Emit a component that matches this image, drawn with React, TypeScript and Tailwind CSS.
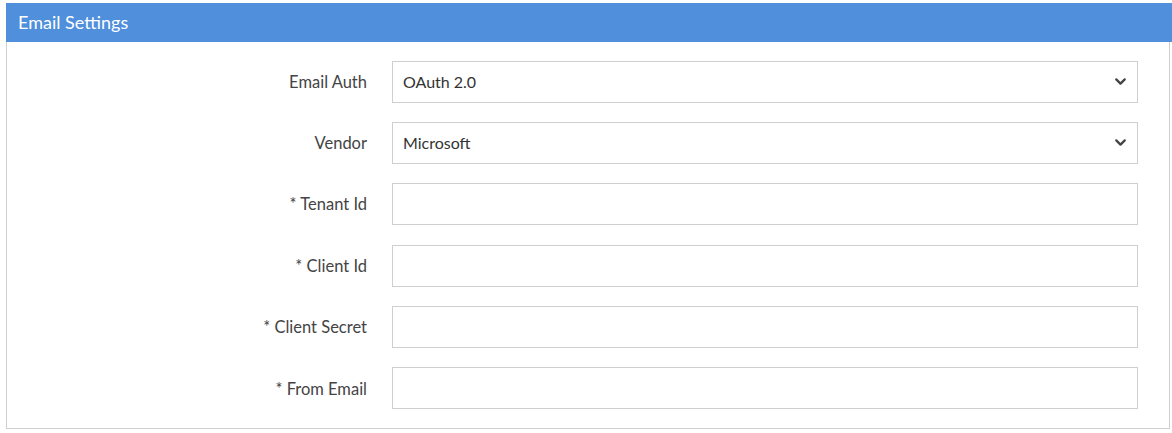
import { ChevronDown } from "lucide-react";

const fields = [
    { label: "Email Auth", type: "select", value: "OAuth 2.0" },
    { label: "Vendor", type: "select", value: "Microsoft" },
    { label: "* Tenant Id", type: "input", value: "" },
    { label: "* Client Id", type: "input", value: "" },
    { label: "* Client Secret", type: "input", value: "" },
    { label: "* From Email", type: "input", value: "" },
];

function App() {
    return (
        <div className="h-[433px] w-[1172px] bg-white pt-[3px] pl-[6px] font-['Lato','Open_Sans',sans-serif]">
            <div className="flex h-[39px] items-center bg-[#4f8fdc] pl-[12px] text-[18px] text-white">
                Email Settings
            </div>
            <div className="flex w-[1164px] flex-col gap-[19.4px] border-x border-b border-[#cfcfcf] pt-[18.5px] pb-[19px] pr-[31px]">
                {fields.map((f) => (
                    <div key={f.label} className="flex h-[42px] items-center">
                        <div className="w-[360px] pt-[1px] text-right text-[16.5px] text-[#444]">{f.label}</div>
                        <div className="ml-[25px] flex h-[42px] flex-1 items-center justify-between border border-[#cfcfcf] bg-white pl-[10px] pr-[8px] text-[16px] text-[#333]">
                            <span>{f.value}</span>
                            {f.type === "select" && (
                                <ChevronDown className="h-[17px] w-[17px] text-[#444]" strokeWidth={3.2} />
                            )}
                        </div>
                    </div>
                ))}
            </div>
        </div>
    );
}

export default App;
